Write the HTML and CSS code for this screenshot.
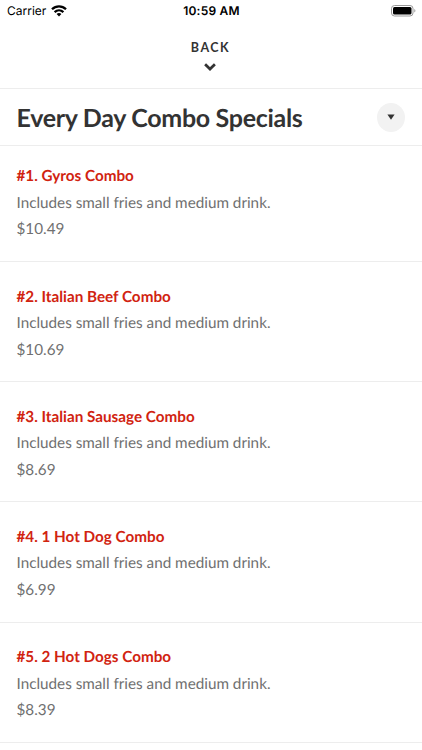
FILE: index.html
```html
<!DOCTYPE html>
<html lang="en">
<head>
<meta charset="utf-8">
<title>Every Day Combo Specials</title>
<link rel="stylesheet" href="styles.css">
</head>
<body>
<div class="status">
  <div class="carrier"><span>Carrier</span>
    <svg class="wifi" width="16" height="12" viewBox="0 0 16 12"><g fill="none" stroke="#000" stroke-width="2.3"><path d="M1 4.3C5 .4 11 .4 15 4.3"/><path d="M3.6 7.1C6.2 4.7 9.8 4.7 12.4 7.1"/></g><path d="M5.6 8.9C7 7.7 9 7.7 10.4 8.9L8 11.4Z"/></svg>
  </div>
  <div class="time">10:59 AM</div>
  <svg class="battery" width="25" height="12" viewBox="0 0 25 12"><rect x=".5" y=".5" width="21.5" height="10.5" rx="3" fill="none" stroke="#999"/><rect x="2" y="2" width="18.5" height="7.5" rx="1.5"/><path d="M23.3 4v3.6c1.5-.6 1.5-3 0-3.6Z" fill="#999"/></svg>
</div>
<button class="back"><span>BACK</span><svg width="12" height="8" viewBox="0 0 12 8"><path d="M1.1 1.2L6 6L10.9 1.2" fill="none" stroke="#333" stroke-width="2.7"/></svg></button>
<header class="heading"><h1>Every Day Combo Specials</h1><button class="toggle" aria-label="Expand"><svg width="8" height="6" viewBox="0 0 8 6"><path d="M.4 .5H7.6L4 5.7Z" fill="#333"/></svg></button></header>
<main>
<article class="item"><h2>#1. Gyros Combo</h2><p>Includes small fries and medium drink.</p><p>$10.49</p></article>
<article class="item"><h2>#2. Italian Beef Combo</h2><p>Includes small fries and medium drink.</p><p>$10.69</p></article>
<article class="item"><h2>#3. Italian Sausage Combo</h2><p>Includes small fries and medium drink.</p><p>$8.69</p></article>
<article class="item"><h2>#4. 1 Hot Dog Combo</h2><p>Includes small fries and medium drink.</p><p>$6.99</p></article>
<article class="item"><h2>#5. 2 Hot Dogs Combo</h2><p>Includes small fries and medium drink.</p><p>$8.39</p></article>
</main>
</body>
</html>
```
FILE: styles.css
```css
* { box-sizing: border-box; }
body { margin: 0; height: 750px; overflow: hidden; background: #fff; color: #333; font-family: Lato, sans-serif; text-rendering: geometricPrecision; }
button { border: 0; padding: 0; color: inherit; font-family: inherit; }
.status { display: grid; grid-template-columns: 1fr auto 1fr; height: 22px; align-items: center; padding: 0 6px 0 7px; color: #000; font: 12px/22px Inter, sans-serif; }
.carrier { display: flex; align-items: center; gap: 4.5px; }
.time { font-weight: 600; letter-spacing: .22px; }
.battery { justify-self: end; }
.back { display: flex; flex-direction: column; align-items: center; width: 100%; height: 67px; padding: 17px 1px 0 0; gap: 7px; background: #fff; border-bottom: 1px solid #ededed; font-size: 12.5px; line-height: 17px; font-weight: 700; letter-spacing: 1.5px; }
.back svg { margin-right: 1px; }
.heading { display: flex; align-items: center; justify-content: space-between; height: 57px; padding: 0 17px 0 16.5px; border-bottom: 1px solid #ededed; }
h1 { margin: 0; padding-top: 2px; font-size: 25px; line-height: 30px; font-weight: 700; letter-spacing: -.3px; }
.toggle { display: flex; align-items: center; justify-content: center; width: 28px; height: 29px; border-radius: 50%; background: #f2f2f2; }
.item { height: 120.2px; padding: 21.5px 17px 0 16.5px; border-bottom: 1px solid #ededed; font-size: 15.25px; line-height: 26.5px; color: #707070; }
.item:first-child { height: 116px; padding-top: 17.3px; }
h2, p { margin: 0; }
h2 { font-size: 15.25px; line-height: 26.5px; color: #d12310; font-weight: 700; }
```
